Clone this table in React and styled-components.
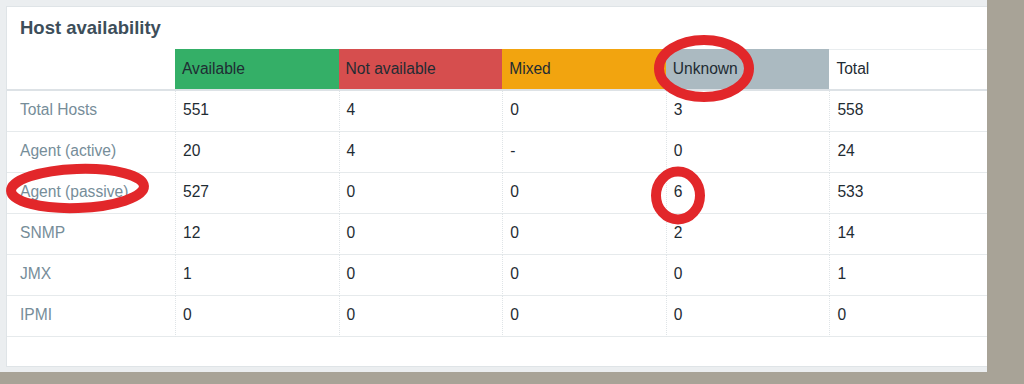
import React from "react";
import styled, { createGlobalStyle } from "styled-components";

const GlobalStyle = createGlobalStyle`
  body {
    margin: 0;
    background: #a8a397;
    font-family: "Liberation Sans", Arial, sans-serif;
  }
`;

const columns = [
  { name: "Available", bg: "#34af67" },
  { name: "Not available", bg: "#d64e4e" },
  { name: "Mixed", bg: "#f2a40f" },
  { name: "Unknown", bg: "#abbac1" },
  { name: "Total" },
];

const rows = [
  ["Total Hosts", "551", "4", "0", "3", "558"],
  ["Agent (active)", "20", "4", "-", "0", "24"],
  ["Agent (passive)", "527", "0", "0", "6", "533"],
  ["SNMP", "12", "0", "0", "2", "14"],
  ["JMX", "1", "0", "0", "0", "1"],
  ["IPMI", "0", "0", "0", "0", "0"],
];

const App = () => {
  return (
    <>
      <GlobalStyle />
      <Screen>
        <Card>
          <Title>Host availability</Title>
          <Table>
            <HeadCell />
            {columns.map((c) => (
              <HeadCell key={c.name} $bg={c.bg}>
                {c.name}
              </HeadCell>
            ))}
            {rows.map((r) =>
              r.map((v, i) =>
                i === 0 ? (
                  <LabelCell key={r[0] + i}>{v}</LabelCell>
                ) : (
                  <ValueCell key={r[0] + i}>{v}</ValueCell>
                )
              )
            )}
          </Table>
        </Card>
        <Marks width="987" height="372" viewBox="0 0 987 372">
          <ellipse cx="704" cy="68.5" rx="45" ry="28.5" />
          <ellipse cx="77.5" cy="188.5" rx="66.5" ry="19.5" transform="rotate(-2 77.5 188.5)" />
          <ellipse cx="678" cy="195.5" rx="22" ry="24" />
        </Marks>
      </Screen>
    </>
  );
};

const Screen = styled.div`
  position: relative;
  width: 987px;
  height: 372px;
  overflow: hidden;
  background: #ebeef0;
  padding: 6px 0 0 6px;
  box-sizing: border-box;
`;

const Card = styled.div`
  width: 1010px;
  height: 361px;
  box-sizing: border-box;
  background: #fff;
  border: 1px solid #dfe4e7;
`;

const Title = styled.div`
  height: 42px;
  box-sizing: border-box;
  padding: 10px 13px 0;
  font-size: 18.5px;
  line-height: 22px;
  font-weight: bold;
  color: #3d4e5a;
`;

const Table = styled.div`
  display: grid;
  grid-template-columns: 168px repeat(5, 163.6px);
  font-size: 15.6px;
`;

const HeadCell = styled.div`
  height: 42px;
  box-sizing: border-box;
  display: flex;
  align-items: center;
  padding: 0 0 1px 7px;
  background: ${(p) => p.$bg || "transparent"};
  color: #1f2c33;
  border-bottom: 2px solid #dde2e6;
  box-shadow: ${(p) => (p.children && !p.$bg ? "inset 0 1px 0 #e9edef" : "none")};
`;

const LabelCell = styled.div`
  height: 41px;
  box-sizing: border-box;
  display: flex;
  align-items: center;
  padding: 0 0 2px 13px;
  color: #768d99;
  border-bottom: 1px solid #e6eaec;
`;

const ValueCell = styled.div`
  height: 41px;
  box-sizing: border-box;
  display: flex;
  align-items: center;
  padding: 0 0 2px 7px;
  color: #1f2c33;
  border-bottom: 1px solid #e6eaec;
  border-left: 1px dotted #dfe4e7;
`;

const Marks = styled.svg`
  position: absolute;
  left: 0;
  top: 0;
  pointer-events: none;
  fill: none;
  stroke: #e2272a;
  stroke-width: 10;
`;

export default App;
